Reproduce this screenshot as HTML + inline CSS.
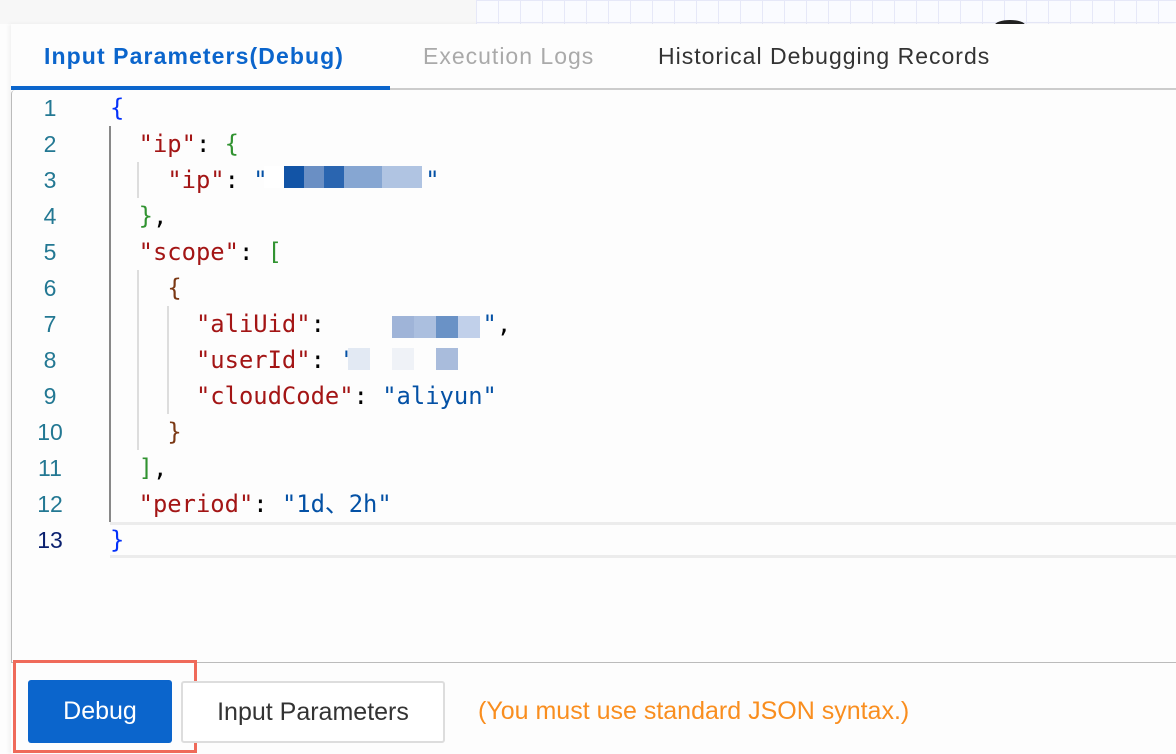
<!DOCTYPE html>
<html><head><meta charset="utf-8"><style>
*{margin:0;padding:0;box-sizing:border-box}
body{width:1176px;height:754px;overflow:hidden;background:#fdfdfd;font-family:"Liberation Sans",sans-serif;position:relative}
.top{position:absolute;left:0;top:0;width:1176px;height:24px;background:#f7f7f7}
.grid{position:absolute;left:476px;top:0;width:700px;height:24px;background-image:linear-gradient(90deg,#e6e8f8 1px,transparent 1px),linear-gradient(#e6e8f8 1px,transparent 1px);background-size:22px 22px;background-color:#fafbff}
.panel{position:absolute;left:11px;top:24px;width:1165px;height:730px;background:#fdfdfd;box-shadow:-2px 0 4px rgba(0,0,0,.05)}
.tab{position:absolute;top:43px;font-size:23px;letter-spacing:1px}
.tabline{position:absolute;left:11px;top:88px;width:1165px;height:2px;background:#ccc}
.active{position:absolute;left:11px;top:86px;width:379px;height:4px;background:#0b65cc}
.editor{position:absolute;left:11px;top:90px;width:1165px;height:573px;border-left:1px solid #bbb;border-bottom:1px solid #bbb;border-top-left-radius:4px}
.ln{position:absolute;left:22px;width:56px;text-align:center;font-family:"Liberation Sans",sans-serif;font-size:23px;color:#237893;line-height:36px}
.code{position:absolute;font-family:"DejaVu Sans Mono",monospace;font-size:23.8px;line-height:36px;white-space:pre;color:#000}
.k{color:#a31515}.s{color:#0451a5}.b1{color:#0431fa}.b2{color:#319331}.b3{color:#7b3814}
.g{position:absolute;width:2px}
.blur{position:absolute;height:22px}
</style></head><body>
<div class="top"></div><div class="grid"></div>
<div style="position:absolute;left:995px;top:20px;width:30px;height:10px;border-top:4px solid #222;border-radius:50% 50% 0 0"></div>
<div class="panel"></div>
<div class="tab" style="left:44px;color:#0b65cc;font-weight:bold;letter-spacing:1.1px">Input Parameters(Debug)</div>
<div class="tab" style="left:423px;color:#aaa">Execution Logs</div>
<div class="tab" style="left:658px;color:#333">Historical Debugging Records</div>
<div class="tabline"></div><div class="active"></div>
<div class="editor"></div>
<div style="position:absolute;left:110px;top:522px;width:1066px;height:36px;border-top:3px solid #ececec;border-bottom:3px solid #ececec"></div>
<div class="g" style="left:109px;top:126px;height:396px;background:#888"></div>
<div class="g" style="left:137px;top:162px;height:36px;background:#ddd"></div>
<div class="g" style="left:137px;top:270px;height:180px;background:#ddd"></div>
<div class="g" style="left:167px;top:306px;height:108px;background:#ddd"></div>
<div class="ln" style="top:90px">1</div>
<div class="ln" style="top:126px">2</div>
<div class="ln" style="top:162px">3</div>
<div class="ln" style="top:198px">4</div>
<div class="ln" style="top:234px">5</div>
<div class="ln" style="top:270px">6</div>
<div class="ln" style="top:306px">7</div>
<div class="ln" style="top:342px">8</div>
<div class="ln" style="top:378px">9</div>
<div class="ln" style="top:414px">10</div>
<div class="ln" style="top:450px">11</div>
<div class="ln" style="top:486px">12</div>
<div class="ln" style="top:522px;color:#0b216f">13</div>
<div class="code" style="left:110px;top:90px"><span class="b1">{</span></div>
<div class="code" style="left:110px;top:126px">  <span class="k">"ip"</span>: <span class="b2">{</span></div>
<div class="code" style="left:110px;top:162px">    <span class="k">"ip"</span>: <span class="s">"           "</span></div>
<div class="code" style="left:110px;top:198px">  <span class="b2">}</span>,</div>
<div class="code" style="left:110px;top:234px">  <span class="k">"scope"</span>: <span class="b2">[</span></div>
<div class="code" style="left:110px;top:270px">    <span class="b3">{</span></div>
<div class="code" style="left:110px;top:306px">      <span class="k">"aliUid"</span>:           <span class="s">"</span>,</div>
<div class="code" style="left:110px;top:342px">      <span class="k">"userId"</span>: <span class="s">'</span></div>
<div class="code" style="left:110px;top:378px">      <span class="k">"cloudCode"</span>: <span class="s">"aliyun"</span></div>
<div class="code" style="left:110px;top:414px">    <span class="b3">}</span></div>
<div class="code" style="left:110px;top:450px">  <span class="b2">]</span>,</div>
<div class="code" style="left:110px;top:486px">  <span class="k">"period"</span>: <span class="s">"1d、2h"</span></div>
<div class="code" style="left:110px;top:522px"><span class="b1">}</span></div>
<div class="blur" style="left:264px;top:166px;width:20px;background:#fff"></div>
<div class="blur" style="left:284px;top:166px;width:20px;background:#1254a6"></div>
<div class="blur" style="left:304px;top:166px;width:20px;background:#6a8fc4"></div>
<div class="blur" style="left:324px;top:166px;width:20px;background:#2a65b0"></div>
<div class="blur" style="left:344px;top:166px;width:38px;background:#86a6d2"></div>
<div class="blur" style="left:382px;top:166px;width:40px;background:#b0c4e2"></div>
<div class="blur" style="left:392px;top:316px;width:22px;background:#9fb4d8"></div>
<div class="blur" style="left:414px;top:316px;width:22px;background:#abbfdf"></div>
<div class="blur" style="left:436px;top:316px;width:22px;background:#6a92c6"></div>
<div class="blur" style="left:458px;top:316px;width:22px;background:#c1d0ea"></div>
<div class="blur" style="left:348px;top:348px;width:22px;background:#e2e9f3"></div>
<div class="blur" style="left:392px;top:348px;width:22px;background:#eff2f7"></div>
<div class="blur" style="left:436px;top:348px;width:22px;background:#a9bcdc"></div>
<div style="position:absolute;left:13px;top:660px;width:184px;height:93px;border:3px solid #ef6a5a"></div>
<div style="position:absolute;left:28px;top:680px;width:144px;height:63px;background:#0b65cc;border-radius:3px;color:#fff;font-size:25px;text-align:center;line-height:63px">Debug</div>
<div style="position:absolute;left:181px;top:681px;width:264px;height:62px;border:2px solid #ddd;border-radius:3px;color:#333;font-size:25px;text-align:center;line-height:58px;background:#fff">Input Parameters</div>
<div style="position:absolute;left:478px;top:697px;color:#f98e1f;font-size:25px">(You must use standard JSON syntax.)</div>
</body></html>
